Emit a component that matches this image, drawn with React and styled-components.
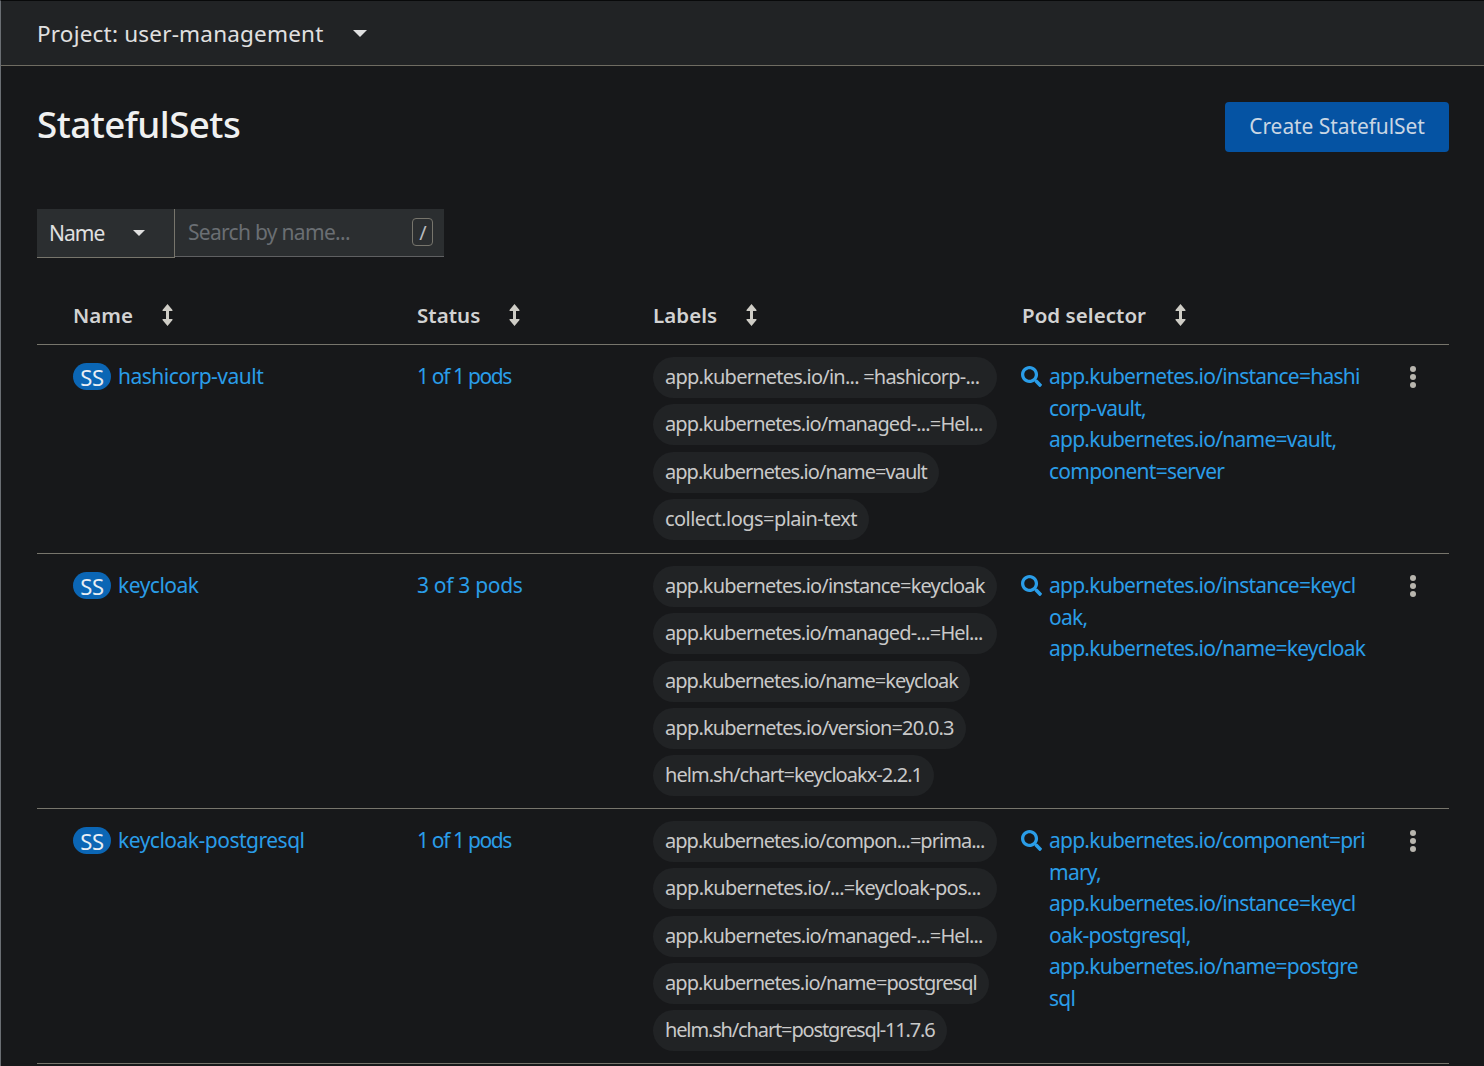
import React from 'react';
import styled, { createGlobalStyle } from 'styled-components';

const Global = createGlobalStyle`
  html, body { margin: 0; padding: 0; background: #17181a; }
  body { font-family: "Noto Sans", "Liberation Sans", sans-serif; color: #e0e0e0; }
  * { box-sizing: border-box; }
`;
const Page = styled.div`
  width: 1484px; height: 1066px; overflow: hidden;
  background: #17181a; border-top: 1px solid #08090a; border-left: 1px solid #6a6e73;
`;
const TopBar = styled.div`
  height: 65px; background: #212325; border-bottom: 1px solid #6f6c62;
  display: flex; align-items: center; padding-left: 36px;
`;
const ProjectName = styled.span`
  color: #e0e0e0; width: 316px; white-space: nowrap; font-size: 22.5px; letter-spacing: 0.2px;
`;
const Caret = styled.span`
  display: inline-block; width: 0; height: 0;
  border-left: ${p => p.$s}px solid transparent; border-right: ${p => p.$s}px solid transparent;
  border-top: ${p => p.$s}px solid #e0e0e0;
`;
const Main = styled.main`padding: 36px 35px 0 36px;`;
const TitleRow = styled.div`display: flex; justify-content: space-between; align-items: flex-start;`;
const Title = styled.h1`
  margin: 0; font-weight: 500; font-size: 36.75px; line-height: 44px; color: #f0f0f0; letter-spacing: -0.55px;
`;
const CreateButton = styled.button`
  width: 224px; height: 50px; border: 0; border-radius: 4px; background: #0553a3; color: #c9d6e4;
  padding: 0 0 2px; font: 400 21px "Noto Sans", sans-serif; letter-spacing: -0.08px;
`;
const Toolbar = styled.div`display: flex; margin-top: 57px; align-items: flex-start;`;
const FilterSelect = styled.div`
  width: 138px; height: 49px; background: #2b2e30; border-bottom: 1px solid #77756c; border-right: 1px solid #77756c;
  display: flex; align-items: center; padding: 0 29px 0 12px; justify-content: space-between;
  font-size: 21px; color: #e0e0e0; letter-spacing: -1px;
`;
const SearchBox = styled.div`
  width: 269px; height: 48px; background: #2b2e30; border-bottom: 1px solid #5f6062;
  display: flex; align-items: center; justify-content: space-between; padding: 0 11px 1px 13px;
  font-size: 21px; color: #6a6e73; letter-spacing: -0.7px;
`;
const SlashKey = styled.span`
  width: 21px; height: 28px; border: 1px solid #77756c; border-radius: 4px; display: flex; align-items: center; justify-content: center;
  color: #b8bbbe; font-size: 20px;
`;
const HeaderRow = styled.div`
  display: grid; grid-template-columns: 344px 236px 369px 1fr; margin-top: 31px; height: 56px; align-items: center;
  padding: 0 0 3px 36px; border-bottom: 1px solid #77756c;
`;
const HeaderCell = styled.div`
  display: flex; align-items: center; font-weight: 600; font-size: 20.5px; color: #d2d2d2; letter-spacing: 0.05px; gap: 29px; white-space: nowrap;
`;
const Row = styled.div`
  display: grid; grid-template-columns: 344px 236px 369px 1fr; padding: 12px 0 0 36px;
  height: ${p => p.$h}px; border-bottom: 1px solid #77756c;
`;
const NameCell = styled.div`display: flex; align-items: flex-start; gap: 7px; padding-top: 4px;`;
const Badge = styled.span`
  width: 38px; height: 27px; margin-top: 2px; border-radius: 14px; background: #0b66b5; color: #e8eef4; flex: none;
  display: flex; align-items: center; justify-content: center; font-size: 22px; letter-spacing: -0.4px;
`;
const LinkText = styled.a`
  color: #2a9de8; font-size: 21px; line-height: 31.5px; letter-spacing: ${p => p.$ls ?? -0.75}px; white-space: nowrap; display: block;
`;
const StatusCell = styled.div`padding-top: 4px;`;
const Labels = styled.div`display: flex; flex-direction: column; align-items: flex-start; gap: 6.25px;`;
const Pill = styled.span`
  height: 41px; border-radius: 21px; background: #212325; color: #c9c9c9; font-size: 20px; line-height: 40px;
  padding: 0 12px; white-space: nowrap; letter-spacing: ${p => p.$ls}px; ${p => p.$wide && 'width: 344px;'}
`;
const SelectorCell = styled.div`display: grid; grid-template-columns: 28px 1fr 36px; padding-top: 4px; width: 424px; margin-left: -1px;`;
const SearchIcon = styled.svg`width: 21px; height: 21px; fill: #2a9de8; margin-top: 5px;`;
const Kebab = styled.svg`width: 6px; height: 22px; fill: #b8b5ae; margin-top: 5px; margin-left: 1px; justify-self: start;`;

const SortIcon = () => (
  <svg width="11" height="22" viewBox="0 0 11 22" fill="#cfcdc6">
    <path d="M5.5 0 L10.5 6 Q11 7 9.8 7 L7 7 L7 15 L9.8 15 Q11 15 10.5 16 L5.500 22 L.5 16 Q0 15 1.2 15 L4 15 L4 7 L1.2 7 Q0 7 .5 6 Z" />
  </svg>
);
const Mag = () => (
  <SearchIcon viewBox="0 0 512 512">
    <path d="M505 442.700L405.300 343c-4.500-4.500-10.600-7-17-7H372c27.600-35.300 44-79.700 44-128C416 93.100 322.900 0 208 0S0 93.100 0 208s93.100 208 208 208c48.300 0 92.700-16.400 128-44v16.300c0 6.400 2.500 12.500 7 17l99.700 99.700c9.400 9.400 24.600 9.400 33.900 0l28.300-28.300c9.400-9.400 9.400-24.600.1-34zM208 336c-70.700 0-128-57.200-128-128 0-70.700 57.200-128 128-128 70.700 0 128 57.200 128 128 0 70.700-57.200 128-128 128z" />
  </SearchIcon>
);
const Dots = () => (
  <Kebab viewBox="0 0 6 22"><circle cx="3" cy="3" r="3" /><circle cx="3" cy="11" r="3" /><circle cx="3" cy="19" r="3" /></Kebab>
);

const rows = [
  { h: 209, name: 'hashicorp-vault', status: '1 of 1 pods', statusLs: -1.35,
    labels: [['app.kubernetes.io/in... =hashicorp-...', -0.77, true], ['app.kubernetes.io/managed-...=Hel...', -0.86, true], ['app.kubernetes.io/name=vault', -0.97], ['collect.logs=plain-text', -0.55]],
    sel: ['app.kubernetes.io/instance=hashi', 'corp-vault,', 'app.kubernetes.io/name=vault,', 'component=server'] },
  { h: 255, name: 'keycloak', status: '3 of 3 pods', statusLs: -0.3,
    labels: [['app.kubernetes.io/instance=keycloak', -0.83, true], ['app.kubernetes.io/managed-...=Hel...', -0.86, true], ['app.kubernetes.io/name=keycloak', -0.98], ['app.kubernetes.io/version=20.0.3', -0.81], ['helm.sh/chart=keycloakx-2.2.1', -0.96]],
    sel: ['app.kubernetes.io/instance=keycl', 'oak,', 'app.kubernetes.io/name=keycloak'] },
  { h: 255, name: 'keycloak-postgresql', status: '1 of 1 pods', statusLs: -1.35,
    labels: [['app.kubernetes.io/compon...=prima...', -0.97, true], ['app.kubernetes.io/...=keycloak-pos...', -0.72, true], ['app.kubernetes.io/managed-...=Hel...', -0.86, true], ['app.kubernetes.io/name=postgresql', -0.93], ['helm.sh/chart=postgresql-11.7.6', -1.14]],
    sel: ['app.kubernetes.io/component=pri', 'mary,', 'app.kubernetes.io/instance=keycl', 'oak-postgresql,', 'app.kubernetes.io/name=postgre', 'sql'] },
];

export default function App() {
  return (
    <Page>
      <Global />
      <TopBar>
        <ProjectName>Project: user-management</ProjectName>
        <Caret $s={7} />
      </TopBar>
      <Main>
        <TitleRow>
          <Title>StatefulSets</Title>
          <CreateButton>Create StatefulSet</CreateButton>
        </TitleRow>
        <Toolbar>
          <FilterSelect>Name <Caret $s={6} /></FilterSelect>
          <SearchBox>Search by name... <SlashKey>/</SlashKey></SearchBox>
        </Toolbar>
        <HeaderRow>
          <HeaderCell>Name <SortIcon /></HeaderCell>
          <HeaderCell>Status <SortIcon /></HeaderCell>
          <HeaderCell>Labels <SortIcon /></HeaderCell>
          <HeaderCell>Pod selector <SortIcon /></HeaderCell>
        </HeaderRow>
        {rows.map(r => (
          <Row key={r.name} $h={r.h}>
            <NameCell><Badge>SS</Badge><LinkText $ls={-0.5}>{r.name}</LinkText></NameCell>
            <StatusCell><LinkText $ls={r.statusLs}>{r.status}</LinkText></StatusCell>
            <Labels>{r.labels.map(([t, ls, wide]) => <Pill key={t} $ls={ls} $wide={wide}>{t}</Pill>)}</Labels>
            <SelectorCell>
              <Mag />
              <div>{r.sel.map(l => <LinkText key={l}>{l}</LinkText>)}</div>
              <Dots />
            </SelectorCell>
          </Row>
        ))}
      </Main>
    </Page>
  );
}
